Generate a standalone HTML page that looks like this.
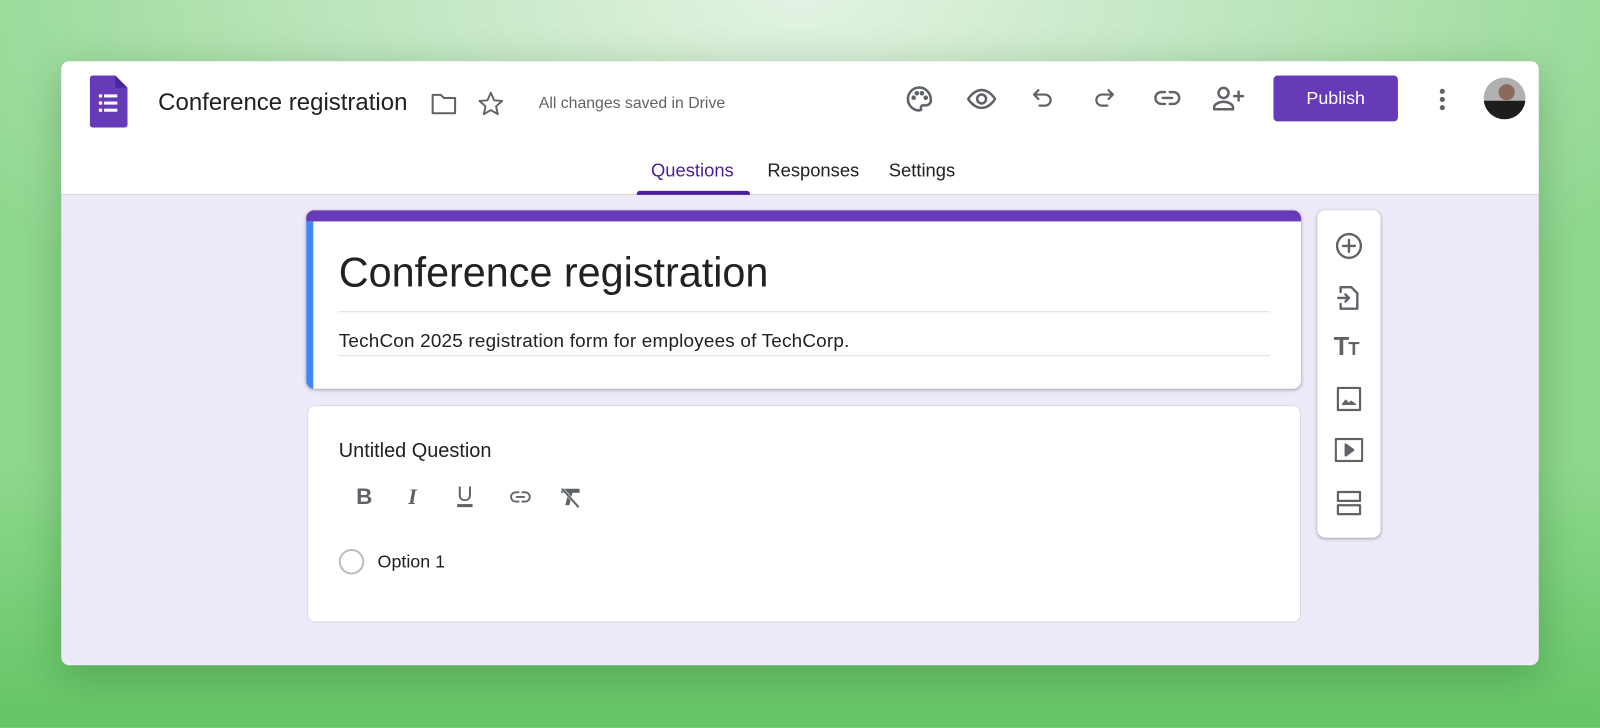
<!DOCTYPE html>
<html><head><meta charset="utf-8"><style>
*{margin:0;padding:0;box-sizing:border-box}
html,body{width:1600px;height:727px;overflow:hidden}
body{font-family:"Liberation Sans",Roboto,sans-serif;background:#8fd88f}
.root{position:absolute;left:0;top:0;width:1568px;height:713px;transform:scale(1.0204);transform-origin:0 0;
background:radial-gradient(ellipse 900px 420px at 784px 0px,#e4f3e4 0%,#b8e4b8 55%,#8fd88f 100%),#8fd88f;overflow:hidden}
.bg2{position:absolute;left:0;right:0;bottom:0;height:260px;background:linear-gradient(to bottom,rgba(100,200,100,0),rgba(95,195,95,.9))}
.win{position:absolute;left:60px;top:60px;width:1448px;height:592px;border-radius:8px;overflow:hidden;background:#ede9f8;box-shadow:0 10px 40px rgba(0,60,0,.25)}
.hdr{position:absolute;left:0;top:0;width:100%;height:131px;background:#fff;border-bottom:1px solid #d6d3dc}
.abs{position:absolute;white-space:nowrap}
svg.i{position:absolute;fill:none;stroke:#5f6368;stroke-width:2;stroke-linecap:round;stroke-linejoin:round}
.card{position:absolute;background:#fff;border-radius:8px;border:1px solid #dadce0}
</style></head><body>
<div class="root">
<div class="bg2"></div>
<div class="win">
 <div class="hdr">
  <svg class="abs" style="left:28px;top:14px" width="37" height="51" viewBox="0 0 37 51"><path d="M3 0H25L37 12V48a3 3 0 0 1-3 3H3a3 3 0 0 1-3-3V3a3 3 0 0 1 3-3z" fill="#673ab7"/><path d="M25 0L37 12H27a2 2 0 0 1-2-2z" fill="#4527a0"/><g fill="#fff"><circle cx="10.5" cy="20" r="1.8"/><circle cx="10.5" cy="27" r="1.8"/><circle cx="10.5" cy="34" r="1.8"/><rect x="14" y="18.5" width="13" height="3"/><rect x="14" y="25.5" width="13" height="3"/><rect x="14" y="32.5" width="13" height="3"/></g></svg>
  <div class="abs" style="left:95px;top:27px;font-size:23.5px;color:#202124">Conference registration</div>
  <svg class="i" style="left:361px;top:29px" width="28" height="26" viewBox="0 0 28 26"><path d="M3 4h8l3 3h11v15H3z"/></svg>
  <svg class="i" style="left:407px;top:28px" width="28" height="28" viewBox="0 0 24 24"><path d="M12 2.5l2.8 6.3 6.7.6-5.1 4.5 1.5 6.6L12 17l-5.9 3.5 1.5-6.6-5.1-4.5 6.7-.6z" stroke-width="1.6"/></svg>
  <div class="abs" style="left:468px;top:33px;font-size:15.5px;color:#5f6368">All changes saved in Drive</div>
  <svg class="i" style="left:826px;top:22px" width="30" height="30" viewBox="0 0 24 24"><path d="M12 3a9 9 0 0 0 0 18c1.2 0 1.6-.8 1.3-1.7-.4-1 .2-2.3 1.5-2.3H17a4 4 0 0 0 4-4c0-5.5-4-10-9-10z"/><circle cx="7.5" cy="11" r=".8" fill="#5f6368"/><circle cx="10" cy="7.5" r=".8" fill="#5f6368"/><circle cx="14" cy="7.5" r=".8" fill="#5f6368"/><circle cx="17" cy="11" r=".8" fill="#5f6368"/></svg>
  <svg class="i" style="left:886px;top:22px" width="32" height="30" viewBox="0 0 24 24"><path d="M1.5 12S5.5 5 12 5s10.5 7 10.5 7-4 7-10.5 7S1.5 12 1.5 12z"/><circle cx="12" cy="12" r="3.5"/></svg>
  <svg class="i" style="left:949px;top:23px" width="26" height="28" viewBox="0 0 24 24"><path d="M8 4L4 8l4 4M4 8h10a5 5 0 0 1 0 10H9"/></svg>
  <svg class="i" style="left:1009px;top:23px" width="26" height="28" viewBox="0 0 24 24"><path d="M16 4l4 4-4 4M20 8H10a5 5 0 0 0 0 10h5"/></svg>
  <svg class="i" style="left:1069px;top:22px" width="30" height="28" viewBox="0 0 24 24"><path d="M10 7H7a5 5 0 0 0 0 10h3M14 7h3a5 5 0 0 1 0 10h-3M8 12h8"/></svg>
  <svg class="i" style="left:1128px;top:21px" width="32" height="30" viewBox="0 0 26 24"><circle cx="9" cy="8" r="4"/><path d="M1.5 21v-1.5c0-2.5 4-4.5 7.5-4.5s7.5 2 7.5 4.5V21zM21 7v7M17.5 10.5h7"/></svg>
  <div class="abs" style="left:1188px;top:14px;width:122px;height:45px;background:#673ab7;border-radius:4px;color:#fff;font-size:17.5px;text-align:center;line-height:45px">Publish</div>
  <div class="abs" style="left:1351px;top:27px;width:5px;height:5px;border-radius:50%;background:#5f6368"></div>
  <div class="abs" style="left:1351px;top:35px;width:5px;height:5px;border-radius:50%;background:#5f6368"></div>
  <div class="abs" style="left:1351px;top:43px;width:5px;height:5px;border-radius:50%;background:#5f6368"></div>
  <div class="abs" style="left:1394px;top:16px;width:41px;height:41px;border-radius:50%;background:radial-gradient(circle at 55% 35%,#8a6a5a 0 22%,transparent 23%),linear-gradient(to bottom,#b0b0b0 0 55%,#1d1d1d 56%);overflow:hidden"></div>
  <div class="abs" style="left:578px;top:97px;font-size:18px;color:#4a1f9c">Questions</div>
  <div class="abs" style="left:564px;top:127px;width:111px;height:4px;background:#4a1f9c;border-radius:3px 3px 0 0"></div>
  <div class="abs" style="left:692px;top:97px;font-size:18px;color:#202124">Responses</div>
  <div class="abs" style="left:811px;top:97px;font-size:18px;color:#202124">Settings</div>
 </div>

 <div class="card" style="left:240px;top:146px;width:975px;height:175px;overflow:hidden;border:none;box-shadow:0 1px 3px rgba(0,0,0,.3)">
  <div class="abs" style="left:0;top:0;width:100%;height:11px;background:#673ab7"></div>
  <div class="abs" style="left:0;top:11px;width:7px;height:164px;background:#4285f4"></div>
  <div class="abs" style="left:32px;top:38px;font-size:40.5px;color:#202124">Conference registration</div>
  <div class="abs" style="left:32px;top:99px;width:912px;height:1px;background:#dadce0"></div>
  <div class="abs" style="left:32px;top:117px;font-size:18.5px;letter-spacing:0.2px;color:#202124">TechCon 2025 registration form for employees of TechCorp.</div>
  <div class="abs" style="left:32px;top:142px;width:912px;height:1px;background:#dadce0"></div>
 </div>

 <div class="card" style="left:241px;top:337px;width:974px;height:213px">
  <div class="abs" style="left:30px;top:33px;font-size:19.5px;color:#202124">Untitled Question</div>
  <div class="abs" style="left:47px;top:76px;font-size:22px;font-weight:bold;color:#5f6368">B</div>
  <div class="abs" style="left:98px;top:76px;font-size:22px;font-weight:bold;font-style:italic;color:#5f6368;font-family:'Liberation Serif',serif">I</div>
  <div class="abs" style="left:146px;top:75px;font-size:21px;color:#5f6368;text-decoration:underline;text-underline-offset:3px;text-decoration-thickness:2.5px">U</div>
  <svg class="i" style="left:194px;top:78px" width="28" height="22" viewBox="0 0 24 24"><path d="M10 7H7a5 5 0 0 0 0 10h3M14 7h3a5 5 0 0 1 0 10h-3M8 12h8"/></svg>
  <svg class="abs" style="left:245px;top:78px" width="24" height="24" viewBox="0 0 24 24"><path d="M3 3h18v4H14l-3 12H7l3-12H3z" fill="#5f6368"/><path d="M4 3l16 18" stroke="#fff" stroke-width="3"/><path d="M4 3l16 18" stroke="#5f6368" stroke-width="2"/></svg>
  <div class="abs" style="left:30px;top:140px;width:25px;height:25px;border-radius:50%;border:2px solid #bdbdbd"></div>
  <div class="abs" style="left:68px;top:142px;font-size:17.5px;color:#202124">Option 1</div>
 </div>

 <div class="card" style="left:1231px;top:146px;width:62px;height:321px;border:none;box-shadow:0 1px 3px rgba(0,0,0,.3)">
  <svg class="i" style="left:17px;top:21px" width="28" height="28" viewBox="0 0 24 24"><circle cx="12" cy="12" r="10"/><path d="M12 7v10M7 12h10"/></svg>
  <svg class="i" style="left:19px;top:72px" width="24" height="28" viewBox="0 0 20 24"><path d="M3 7V3h9l5 5v13H3v-4M1 12h9M7 9l3 3-3 3"/></svg>
  <div class="abs" style="left:16px;top:120px;font-size:25px;font-weight:bold;color:#5f6368;letter-spacing:-1px">T<span style="font-size:18px">T</span></div>
  <svg class="i" style="left:18px;top:172px" width="26" height="26" viewBox="0 0 24 24"><rect x="2" y="2" width="20" height="20"/><path d="M6 17l3-4 3 3 2-2 4 3z" fill="#5f6368" stroke-width="1"/></svg>
  <svg class="i" style="left:17px;top:223px" width="28" height="24" viewBox="0 0 26 22"><rect x="1" y="1" width="24" height="20"/><path d="M10 6v10l7-5z" fill="#5f6368"/></svg>
  <svg class="i" style="left:18px;top:274px" width="26" height="26" viewBox="0 0 24 24"><rect x="2" y="2" width="20" height="8"/><rect x="2" y="14" width="20" height="8"/></svg>
 </div>
</div>
</div>
</body></html>
